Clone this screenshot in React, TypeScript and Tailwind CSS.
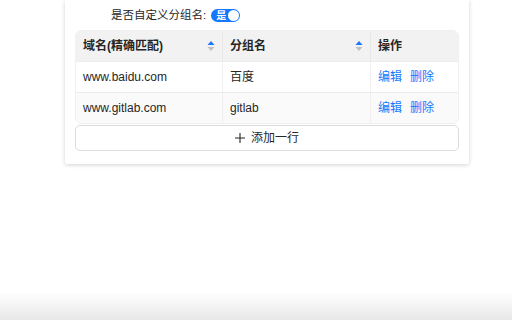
import React from "react";

const font = { fontFamily: '"Liberation Sans", "Noto Sans CJK SC", sans-serif' };

function SortIcon() {
  return (
    <svg width="8" height="12" viewBox="0 0 8 12" className="shrink-0">
      <path d="M4 1 L7.5 5 L0.5 5 Z" fill="#1677ff" />
      <path d="M4 11 L7.5 7 L0.5 7 Z" fill="#bfbfbf" />
    </svg>
  );
}

const rows = [
  { domain: "www.baidu.com", group: "百度" },
  { domain: "www.gitlab.com", group: "gitlab" },
];

export default function App() {
  return (
    <div className="h-[320px] w-[512px] flex flex-col bg-white overflow-hidden text-[12px] text-[#262626]" style={font}>
      <div className="ml-[65px] w-[404px] bg-white shadow-[0_1px_4px_rgba(0,0,0,0.18)] px-[10px] pb-[13px] pt-[8px] rounded-b-[2px]">
        <div className="flex items-center h-[15px] pl-[36px] gap-[5px]">
          <span className="text-[11.5px]">是否自定义分组名:</span>
          <span className="flex items-center h-[13px] w-[29px] rounded-full bg-[#1677ff] pl-[5px] pr-[1px] justify-between">
            <span className="text-white text-[10px] font-bold leading-none">是</span>
            <span className="h-[11px] w-[11px] rounded-full bg-white" />
          </span>
        </div>
        <div className="mt-[7px] rounded-[6px] border border-[#f0f0f0] overflow-hidden">
          <div className="flex h-[30px] bg-[#f2f2f2] font-semibold text-[#262626]">
            <div className="w-[147px] flex items-center justify-between pl-[7px] pr-[7px] border-r border-[#e8e8e8]">
              <span>域名(精确匹配)</span>
              <SortIcon />
            </div>
            <div className="w-[148px] flex items-center justify-between pl-[7px] pr-[7px] border-r border-[#e8e8e8]">
              <span>分组名</span>
              <SortIcon />
            </div>
            <div className="flex-1 flex items-center pl-[7px]">操作</div>
          </div>
          {rows.map((r, i) => (
            <div key={i} className={`flex h-[31px] border-t border-[#ececec] ${i === 1 ? "bg-[#fafafa]" : "bg-white"}`}>
              <div className="w-[147px] flex items-center pl-[7px] border-r border-[#efefef]">{r.domain}</div>
              <div className="w-[148px] flex items-center pl-[7px] border-r border-[#efefef]">{r.group}</div>
              <div className="flex-1 flex items-center pl-[7px] gap-[8px] text-[#1677ff]">
                <span>编辑</span>
                <span>删除</span>
              </div>
            </div>
          ))}
        </div>
        <div className="mt-px h-[26px] rounded-[5px] border border-[#dcdcdc] flex items-center justify-center gap-[6px] text-[#262626]">
          <svg width="10" height="10" viewBox="0 0 10 10">
            <path d="M5 0 V10 M0 5 H10" stroke="#262626" strokeWidth="1.1" />
          </svg>
          <span>添加一行</span>
        </div>
      </div>
      <div className="flex-1" />
      <div className="h-[28px] bg-gradient-to-b from-white to-[#e8e8e8]" />
    </div>
  );
}
